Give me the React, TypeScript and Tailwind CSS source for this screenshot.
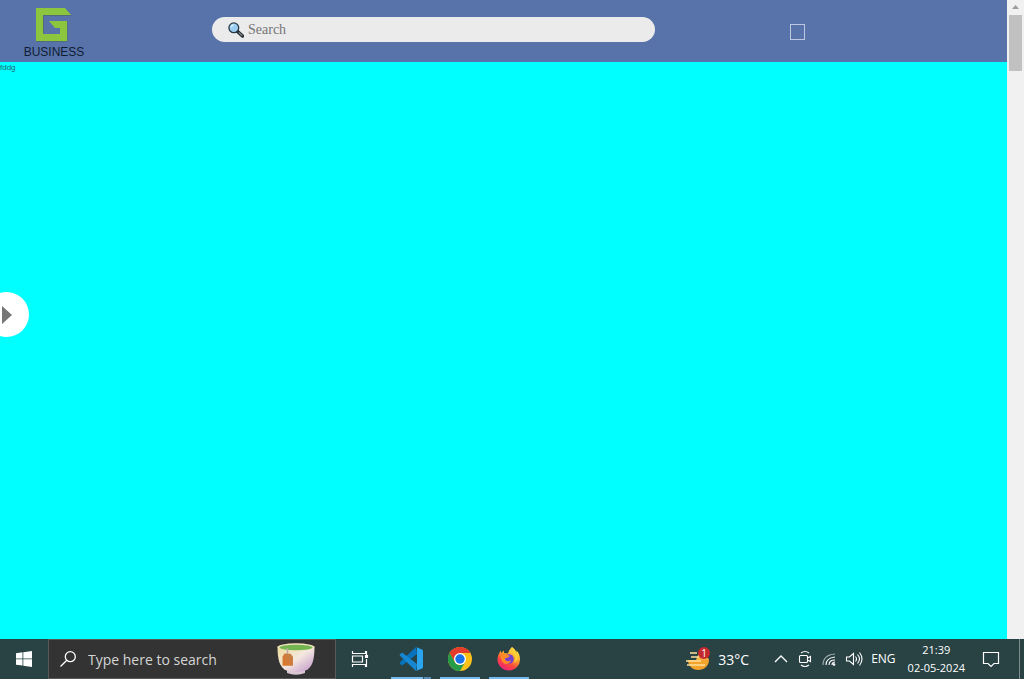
import type { ReactNode } from "react";

function BusinessLogo() {
  return (
    <a href="#home" className="flex w-27 shrink-0 flex-col items-center pt-2 text-[#101c34]">
      <svg viewBox="0 0 36 34" className="h-[34px] w-9" aria-hidden="true">
        <path fill="none" stroke="#526b78" strokeWidth="1" d="M35 7.500H7.500V26M0 33.500h31V13" />
        <path fill="#8cc63f" d="M0 0h29l6 7H7v19h17v-6h-5l-6-7h18v20H0z" />
      </svg>
      <span className="text-[12px] leading-5">BUSINESS</span>
    </a>
  );
}

function Magnifier() {
  return (
    <svg viewBox="0 0 16 16" className="h-4 w-4 shrink-0" aria-hidden="true">
      <path d="m9 9 5.500 5" stroke="#202629" strokeWidth="3.400" strokeLinecap="round" />
      <path d="m11 10.800 3 2.700" stroke="#7f898c" strokeWidth="1.300" strokeLinecap="round" />
      <circle cx="5.800" cy="5.800" r="4.900" fill="#9bcdf0" stroke="#283a47" strokeWidth="1.300" />
      <path d="M3.200 5.500a2.800 2.800 0 0 1 2.600-2.500" stroke="#d7f0ff" strokeWidth="1.300" fill="none" />
    </svg>
  );
}

function Header() {
  return (
    <header className="flex h-[62px] shrink-0 bg-[#5873a9]">
      <BusinessLogo />
      <label className="mt-[17px] ml-26 flex h-[25px] w-[44%] items-center gap-1 rounded-full bg-[#ebebeb] px-4">
        <Magnifier />
        <input
          type="text"
          aria-label="Search"
          placeholder="Search"
          className="min-w-0 flex-1 bg-transparent font-['Liberation_Serif',serif] text-[14px] text-[#333] outline-none placeholder:text-[#757575]"
        />
      </label>
      <button aria-label="Menu" className="mt-6 ml-[135px] h-4 w-[15px] border border-[#bdc9e0]" />
    </header>
  );
}

function ScrollTrack() {
  return (
    <div className="flex w-[17px] shrink-0 flex-col items-center bg-[#f1f1f1]" aria-hidden="true">
      <svg viewBox="0 0 17 15" className="h-[15px] w-[17px]">
        <path d="M5 9h7L8.500 5z" fill="#9d9d9d" />
      </svg>
      <div className="h-14 w-[13px] bg-[#c1c1c1]" />
    </div>
  );
}

function TaskApp({ label, stacked = false, children }: { label: string; stacked?: boolean; children: ReactNode }) {
  return (
    <button aria-label={label} className="flex h-full w-10 flex-col">
      <span className="flex w-full flex-1 items-center justify-center pt-px">{children}</span>
      <span className="flex h-0.5 w-full">
        <span className="flex-1 bg-[#76b9ed]" />
        {stacked && <span className="w-2 border-l border-[#38515c] bg-[#5a8bb0]" />}
      </span>
    </button>
  );
}

function VsCodeIcon() {
  return (
    <svg viewBox="0 0 24 24" className="h-6 w-6" aria-hidden="true">
      <path fill="#0873bd" d="M17 0 1 15.200a1 1 0 0 0 0 1.500L2.500 18a1 1 0 0 0 1.300 0L18 7z" />
      <path fill="#1688d1" d="M17 24 1 8.800a1 1 0 0 1 0-1.500L2.500 6a1 1 0 0 1 1.300 0L18 17z" />
      <path fill="#2ba5ee" d="m17 0 6 2.500q1 .5 1 1.500v16q0 1-1 1.500L17 24q1-.5 1-2V2q0-1.500-1-2z" />
    </svg>
  );
}

function ChromeIcon() {
  return (
    <svg viewBox="0 0 24 24" className="h-6 w-6" aria-hidden="true">
      <circle cx="12" cy="12" r="12" fill="#fbc116" />
      <path fill="#e33b2e" d="M1.600 6A12 12 0 0 1 22.400 6H12L6.800 15z" />
      <path fill="#269b48" d="M1.600 6A12 12 0 0 0 12 24l5.200-9A6 6 0 0 1 6.800 15z" />
      <circle cx="12" cy="12" r="6" fill="#fff" />
      <circle cx="12" cy="12" r="4.700" fill="#1a73e8" />
    </svg>
  );
}

function FirefoxIcon() {
  return (
    <svg viewBox="0 0 24 24" className="h-6 w-6" aria-hidden="true">
      <defs>
        <linearGradient id="fox" x1=".8" y1="0" x2=".25" y2="1">
          <stop offset="0" stopColor="#fff14b" />
          <stop offset=".4" stopColor="#ffa52d" />
          <stop offset=".7" stopColor="#ff443f" />
          <stop offset="1" stopColor="#e91f83" />
        </linearGradient>
      </defs>
      <path fill="url(#fox)" d="M15 0c3 2 4 4 4.500 6V3.500c2.200 2.200 3.500 5.300 3.500 8.500a11 11 0 0 1-11 11.500C5.500 23.500.5 18.500.5 12.500.5 9 1.800 6 4 3.500V6l3-2.500V6l4 .5C11.500 4 13 2 15 0z" />
      <circle cx="12" cy="12" r="4.800" fill="#7542cf" />
      <path fill="#ff8c28" d="M3.500 8 7 6.500l4 1.500 2 1-3 2H8c0 4 4 4 6 2-1 5-7 5-9 1-1-2-1-4-1.500-6z" />
      <path fill="#ffcf36" d="M15 0c-2 4 2 5 3 9 1 3-.5 6-2 7 4-1 6-5 4-9-1-3-4-4-5-7z" />
    </svg>
  );
}

function TeaCup() {
  return (
    <svg viewBox="0 0 38 32" className="h-8 w-[38px]" aria-hidden="true">
      <defs>
        <linearGradient id="cup" x1="0" y1="0" x2="1" y2="1">
          <stop offset="0" stopColor="#eedb98" />
          <stop offset=".5" stopColor="#f4e7df" />
          <stop offset="1" stopColor="#be91ca" />
        </linearGradient>
        <linearGradient id="bag" x1="0" y1="1" x2="1" y2="0">
          <stop stopColor="#df772a" />
          <stop offset="1" stopColor="#bf804b" />
        </linearGradient>
      </defs>
      <path fill="#dbc7d4" d="M10 25h18v5q-9 3.500-18 0z" />
      <path fill="url(#cup)" d="M.5 3.500h37c0 13-2 21-9 24q-9.500 3-19 0C2.500 24.500.5 16.500.5 3.500z" />
      <ellipse cx="19" cy="4" rx="18.500" ry="3.700" fill="#efe4bc" />
      <ellipse cx="19" cy="4.500" rx="16.500" ry="2.800" fill="#73b550" />
      <path stroke="#b8a9a3" strokeWidth="1.500" d="M10.500 5v7" />
      <path fill="url(#bag)" d="m7.500 10.500 6 .2 2.500 3v9H5.500v-9z" />
    </svg>
  );
}

function WeatherIcon() {
  return (
    <svg viewBox="0 0 26 26" className="h-[26px] w-[26px]" aria-hidden="true">
      <path fill="#f2a32c" d="M4 14h21c0 6-5 10-11 10S4 19 4 14z" />
      <path fill="#f6b343" d="M14 9h9l2 5H12z" />
      <path stroke="#ffe19c" strokeWidth="1.600" d="M6 7h7M7 11h8M2 15h15M3 19h18" />
      <circle cx="20" cy="7" r="6" fill="#c4292b" />
      <text x="20" y="10.500" fill="white" textAnchor="middle" fontSize="10" fontFamily="Open Sans">1</text>
    </svg>
  );
}

function Tray() {
  return (
    <div className="flex items-center">
      <button aria-label="Weather, one alert" className="flex items-center gap-2 text-[14px]">
        <WeatherIcon />
        <span>33°C</span>
      </button>
      <div className="ml-6 flex items-center gap-2">
        <button aria-label="Show hidden icons">
          <svg viewBox="0 0 16 18" className="h-[18px] w-4" fill="none" stroke="white" strokeWidth="1.300"><path d="m2 12 6-6 6 6" /></svg>
        </button>
        <button aria-label="Camera">
          <svg viewBox="0 0 16 18" className="h-[18px] w-4" fill="none" stroke="white" strokeWidth="1.100">
            <rect x="2.500" y="5.500" width="8" height="7" rx="1" /><path d="m10.500 8 3-1.500v5l-3-1.500M4 3q4-3 8 0M4 15q4 3 8 0" />
          </svg>
        </button>
        <button aria-label="Network">
          <svg viewBox="0 0 16 18" className="h-[18px] w-4" fill="none" stroke="white" strokeWidth="1.100">
            <path stroke="#a5b2b3" d="M2 15Q2 5 14 4" /><path d="M5 15q0-7 9-8M8 15q0-5 6-5M11 15q0-3 3-3" /><circle cx="13" cy="14.500" r=".8" fill="white" />
          </svg>
        </button>
        <button aria-label="Volume">
          <svg viewBox="0 0 18 18" className="h-[18px] w-[18px]" fill="none" stroke="white" strokeWidth="1.100">
            <path d="M1.500 7h3l4-3.500v11l-4-3.500h-3zM10.500 6.500q2 2.500 0 5M12.500 4.500q4 4.500 0 9M14.500 2.500q5 6.500 0 13" />
          </svg>
        </button>
        <button className="text-[12px]">ENG</button>
      </div>
      <button className="ml-3 text-center text-[11px] leading-[18px]">
        <time className="block">21:39</time>
        <time className="block">02-05-2024</time>
      </button>
      <button aria-label="Notifications" className="ml-[17px]">
        <svg viewBox="0 0 18 18" className="h-[18px] w-[18px]" fill="none" stroke="white" strokeWidth="1.200">
          <path d="M1.500 2.500h15v11H12l-3 3-3-3H1.500z" />
        </svg>
      </button>
      <button aria-label="Show desktop" className="ml-[19px] h-10 w-[5px] border-l border-[#7c8b8b]" />
    </div>
  );
}

function Taskbar() {
  return (
    <footer className="flex h-10 shrink-0 justify-between bg-[#294244] font-['Open_Sans',sans-serif] text-white">
      <div className="flex">
        <button aria-label="Start" className="flex w-12 items-center justify-center">
          <svg viewBox="0 0 16 16" className="h-4 w-4" fill="white" aria-hidden="true">
            <path d="m0 2.200 6.500-.9v6.200H0zM7.300 1.200 16 0v7.500H7.300zM0 8.300h6.500v6.300L0 13.700zM7.300 8.300H16V16l-8.700-1.200z" />
          </svg>
        </button>
        <label className="flex w-72 items-center border border-[#5b5958] bg-[#333] pr-5 pl-[11px]">
          <svg viewBox="0 0 16 16" className="h-4 w-4 shrink-0" fill="none" stroke="white" strokeWidth="1.300" aria-hidden="true">
            <circle cx="10.300" cy="5.700" r="5" /><path d="M6.800 9.300.5 15.500" />
          </svg>
          <input
            type="text"
            aria-label="Type here to search"
            placeholder="Type here to search"
            className="ml-3 min-w-0 flex-1 bg-transparent text-[14px] outline-none placeholder:text-[#d5d5d5]"
          />
          <TeaCup />
        </label>
        <button aria-label="Task view" className="flex w-12 items-center justify-center">
          <svg viewBox="0 0 18 16" className="h-4 w-[18px]" fill="none" stroke="white" strokeWidth="1.200" aria-hidden="true">
            <path d="M1.500 0v2.500h13V0M1.500 16v-2.500h13V16M1.500 5h10v6h-10zM15.500 0v4M15.500 8v8" /><path fill="white" d="M14.500 4.500h2v2h-2z" />
          </svg>
        </button>
        <nav aria-label="Open applications" className="ml-[7px] flex gap-[9px]">
          <TaskApp label="Visual Studio Code" stacked><VsCodeIcon /></TaskApp>
          <TaskApp label="Google Chrome"><ChromeIcon /></TaskApp>
          <TaskApp label="Firefox"><FirefoxIcon /></TaskApp>
        </nav>
      </div>
      <Tray />
    </footer>
  );
}

export default function App() {
  return (
    <div className="flex h-screen flex-col overflow-hidden font-['Liberation_Sans',sans-serif]">
      <div className="flex min-h-0 flex-1">
        <div className="flex min-w-0 flex-1 flex-col">
          <Header />
          <main className="relative flex-1 overflow-hidden bg-[#00ffff]">
            <p className="text-[8px] leading-3 text-[#256b70]">fddg</p>
            <button aria-label="Open side panel" className="absolute top-[230px] -left-4 flex h-[45px] w-[45px] items-center rounded-full bg-white pl-[18px]">
              <svg viewBox="0 0 10 18" className="h-[18px] w-[10px]" aria-hidden="true"><path fill="#757575" d="m0 0 10 9-10 9z" /></svg>
            </button>
          </main>
        </div>
        <ScrollTrack />
      </div>
      <Taskbar />
    </div>
  );
}
